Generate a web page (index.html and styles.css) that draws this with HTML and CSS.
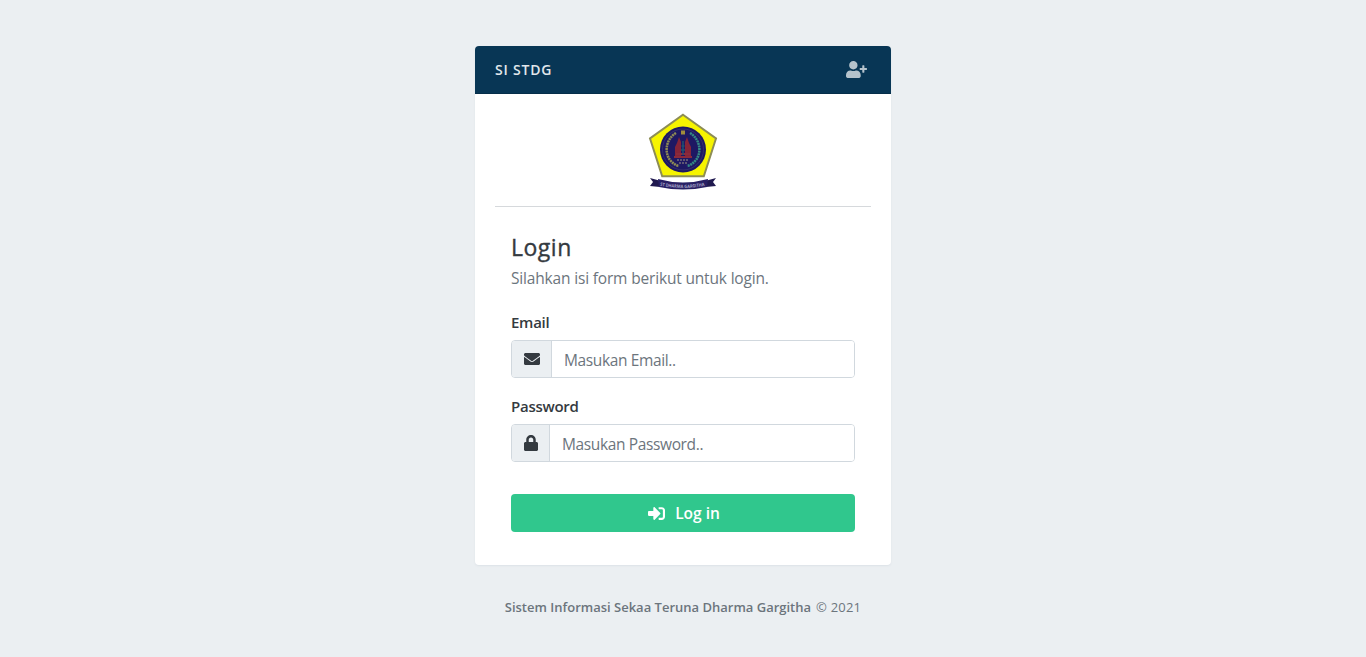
FILE: index.html
```
<!DOCTYPE html>
<html lang="id">
<head>
<meta charset="utf-8">
<title>Login - SI STDG</title>
<link rel="stylesheet" href="styles.css">
</head>
<body>
<main class="page">
  <section class="card">
    <header class="card-header">
      <h3 class="card-title">SI STDG</h3>
      <a class="register" aria-label="Register"><svg width="21" height="17" viewBox="0 0 640 512"><path fill="currentColor" d="M624 208h-64v-64c0-8.800-7.200-16-16-16h-32c-8.800 0-16 7.200-16 16v64h-64c-8.800 0-16 7.200-16 16v32c0 8.800 7.200 16 16 16h64v64c0 8.800 7.200 16 16 16h32c8.800 0 16-7.200 16-16v-64h64c8.800 0 16-7.200 16-16v-32c0-8.800-7.200-16-16-16zM224 256c70.700 0 128-57.300 128-128S294.700 0 224 0 96 57.300 96 128s57.300 128 128 128zm89.600 32h-16.700c-22.200 10.200-46.900 16-72.900 16s-50.600-5.800-72.900-16h-16.700C60.200 288 0 348.200 0 422.400V464c0 26.500 21.500 48 48 48h352c26.500 0 48-21.500 48-48v-41.600c0-74.200-60.200-134.400-134.400-134.400z"/></svg></a>
    </header>
    <div class="logo">
      <svg width="70" height="78" viewBox="0 0 70 78">
        <path d="M35 2.800 68 26.500 55.800 64.200H14.200L2 26.500z" fill="#f6f400" stroke="#8d8d55" stroke-width="2"/>
        <circle cx="35" cy="37.500" r="23" fill="#1e1863"/>
        <circle cx="35" cy="37.500" r="20.500" fill="none" stroke="#34306c" stroke-width="1"/>
        <path d="M28 21C18 27 16 40 22 48q4 5 9 6" fill="none" stroke="#8e8b55" stroke-width="2.500" stroke-dasharray="2 .6"/>
        <path d="M42 21c10 6 12 19 6 27q-4 5-9 6" fill="none" stroke="#358a84" stroke-width="2.500" stroke-dasharray="2 .6"/>
        <path d="M33 18.500h4v4h-4z" fill="#a08c3d"/>
        <path d="M31 25l2 5v14h-6v-9l2-4zM39 25l-2 5v14h6v-9l-2-4z" fill="#852438"/>
        <path d="M26 45h18M28 42h14" stroke="#8a2a3c" stroke-width="2"/>
        <path d="M35 29v14M33.500 34h3M33 38h4" stroke="#205170" stroke-width="1.500"/>
        <path d="M29 48h12M31 51h8" stroke="#5d5674" stroke-width="2" stroke-dasharray="2 1"/>
        <path d="M2 66l11 3-1 6-10-1 3-4zM68 66l-11 3 1 6 10-1-3-4z" fill="#20194f"/>
        <path d="M10 67q25 7 50 0l-1 8q-24 5-48 0z" fill="#282064"/>
        <path id="motto" d="M12 73.500q23 5 46 0" fill="none"/>
        <text class="motto"><textPath href="#motto" textLength="45" lengthAdjust="spacingAndGlyphs">ST DHARMA GARGITHA</textPath></text>
      </svg>
    </div>
    <form class="form">
      <h1 class="heading">Login</h1>
      <p class="intro">Silahkan isi form berikut untuk login.</p>
      <label class="label" for="email">Email</label>
      <div class="field">
        <span class="addon addon-email"><svg width="16" height="16" viewBox="0 0 512 512"><path fill="currentColor" d="M502.300 190.800c3.900-3.100 9.700-.2 9.700 4.700V400c0 26.500-21.500 48-48 48H48c-26.500 0-48-21.500-48-48V195.600c0-5 5.700-7.800 9.700-4.700 22.400 17.400 52.100 39.500 154.100 113.600 21.100 15.400 56.700 47.800 92.200 47.600 35.700.3 72-32.800 92.300-47.600 102-74.100 131.600-96.300 154-113.700zM256 320c23.200.4 56.600-29.200 73.400-41.400 132.700-96.300 142.800-104.700 173.400-128.700 5.800-4.500 9.200-11.500 9.200-18.900v-19c0-26.500-21.500-48-48-48H48c-26.500 0-48 21.500-48 48v19c0 7.400 3.400 14.300 9.200 18.900 30.600 23.900 40.700 32.400 173.400 128.700 16.800 12.200 50.200 41.800 73.400 41.400z"/></svg></span>
        <input class="input" id="email" type="email" placeholder="Masukan Email..">
      </div>
      <label class="label" for="password">Password</label>
      <div class="field">
        <span class="addon addon-password"><svg width="14" height="16" viewBox="0 0 448 512"><path fill="currentColor" d="M400 224h-24v-72C376 68.200 307.800 0 224 0S72 68.200 72 152v72H48c-26.500 0-48 21.500-48 48v192c0 26.500 21.500 48 48 48h352c26.500 0 48-21.500 48-48V272c0-26.500-21.500-48-48-48zm-104 0H152v-72c0-39.700 32.300-72 72-72s72 32.300 72 72v72z"/></svg></span>
        <input class="input" id="password" type="password" placeholder="Masukan Password..">
      </div>
      <button class="submit" type="button"><svg width="17" height="17" viewBox="0 0 512 512"><path fill="currentColor" d="M416 448h-84c-6.600 0-12-5.400-12-12v-40c0-6.600 5.400-12 12-12h84c17.700 0 32-14.300 32-32V160c0-17.700-14.300-32-32-32h-84c-6.600 0-12-5.400-12-12V76c0-6.600 5.400-12 12-12h84c53 0 96 43 96 96v192c0 53-43 96-96 96zm-47-209L201 71c-15-15-41-4.500-41 17v96H24c-13.300 0-24 10.700-24 24v96c0 13.300 10.700 24 24 24h136v96c0 21.500 26 32 41 17l168-168c9.300-9.400 9.300-24.600 0-34z"/></svg><span>Log in</span></button>
    </form>
  </section>
  <footer class="footer"><strong class="org">Sistem Informasi Sekaa Teruna Dharma Gargitha</strong><span class="year">© 2021</span></footer>
</main>
</body>
</html>
```
FILE: styles.css
```
* { box-sizing: border-box; }
body { margin: 0; background: #ebeff2; color: #343a40; font: 15.5px/24px "Open Sans", "Noto Sans", sans-serif; }
svg { display: block; flex: none; }
.page { min-height: 657px; padding-top: 46px; display: flex; flex-direction: column; align-items: center; }
.card { width: 416px; height: 519px; background: #fff; border-radius: 4px; box-shadow: 0 1px 2px #dce2e7; overflow: hidden; }
.card-header { height: 48px; padding: 0 24px 0 20px; display: flex; align-items: center; justify-content: space-between; background: #083655; border-bottom: 1px solid #062e49; }
.card-title { margin: 0; font-size: 14px; font-weight: 600; letter-spacing: .8px; color: #e1e7eb; }
.register { color: #b5c3cc; }
.logo { height: 113px; margin: 0 20px; padding-top: 18px; display: flex; justify-content: center; border-bottom: 1px solid #d6d9dc; }
.motto { font: 700 4.500px "Open Sans", sans-serif; fill: #aaa6c9; }
.form { padding: 25px 36px 0; }
.heading { margin: 0; font-size: 23px; line-height: 30px; font-weight: 500; letter-spacing: .5px; -webkit-text-stroke: .35px currentColor; }
.intro { margin: 4px 0 20px; color: #6c757d; letter-spacing: -.17px; }
.label { display: block; margin-bottom: 6px; font-size: 15px; font-weight: 600; letter-spacing: -.27px; }
.field { display: flex; height: 38px; margin-bottom: 16px; border: 1px solid #d1d8de; border-radius: 4px; overflow: hidden; }
.addon { display: flex; align-items: center; justify-content: center; flex: none; background: #ebeff2; border-right: 1px solid #d1d8de; }
.addon-email { width: 40px; }
.addon-password { width: 38px; }
.input { flex: 1; min-width: 0; padding: 2px 12px 0; border: 0; outline: 0; background: #fff; font: inherit; letter-spacing: -.37px; }
.input::placeholder { color: #6c757d; opacity: 1; }
.submit { display: flex; width: 100%; height: 38px; margin-top: 32px; padding: 0 0 0 2px; align-items: center; justify-content: center; gap: 10px; border: 0; border-radius: 4px; background: #30c78d; color: #fff; font: 600 15.5px/24px "Open Sans", sans-serif; }
.footer { display: flex; gap: 5px; margin-top: 32px; font-size: 13px; line-height: 20px; color: #6c757d; white-space: nowrap; }
.org { font-weight: 600; }
.year { letter-spacing: .2px; }
```
